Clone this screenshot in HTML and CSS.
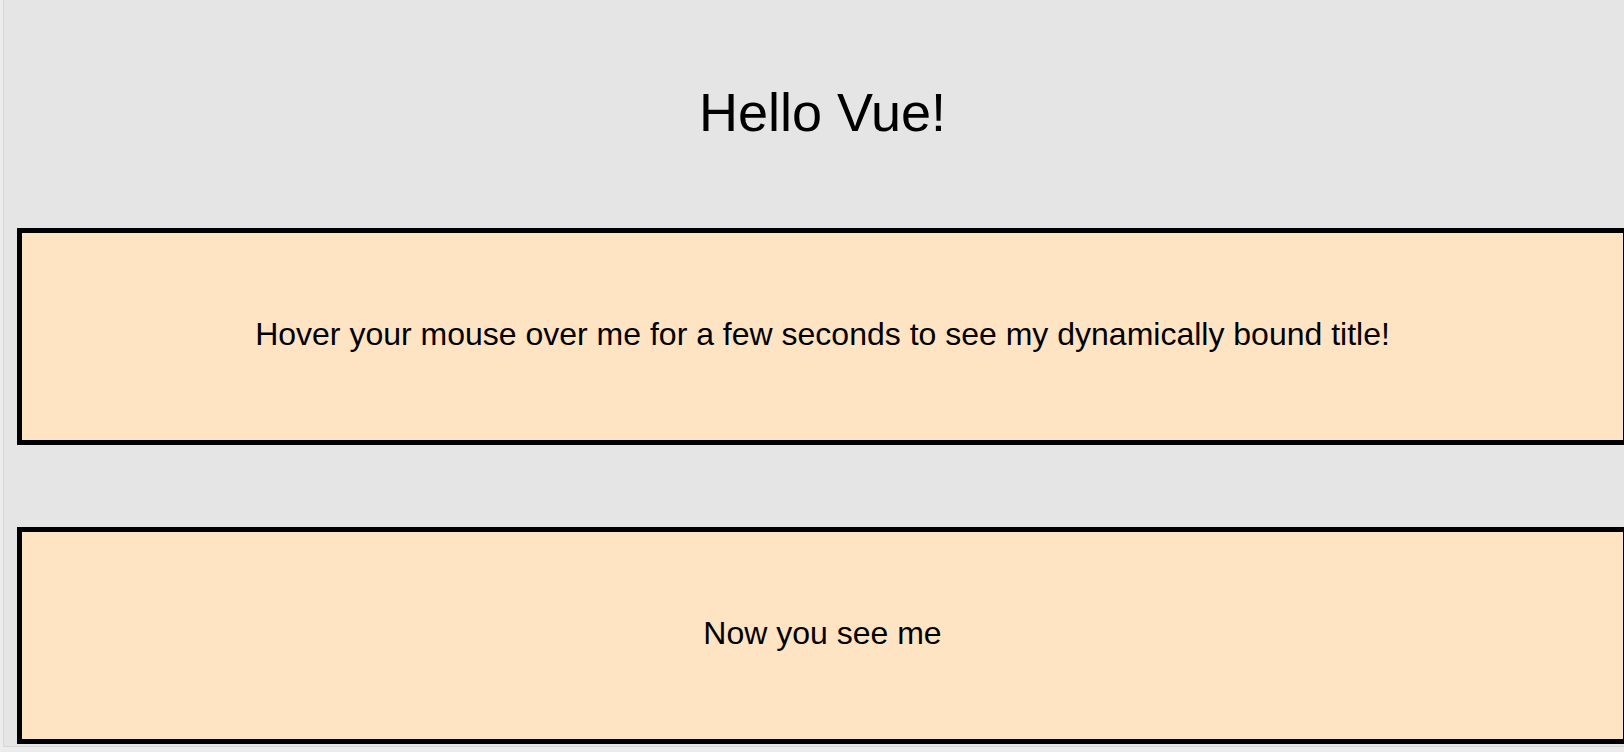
FILE: index.html
```html
<!DOCTYPE html>
<html lang="en">
<head>
<meta charset="utf-8">
<title>Hello Vue!</title>
<link rel="stylesheet" href="styles.css">
</head>
<body>
<div class="frame">
  <div class="app">
    <h1 class="title">Hello Vue!</h1>
    <div class="panel" title="You loaded this page on a recent date">
      <span class="panel-text">Hover your mouse over me for a few seconds to see my dynamically bound title!</span>
    </div>
    <div class="panel panel-second">
      <span class="panel-text">Now you see me</span>
    </div>
  </div>
</div>
</body>
</html>
```

FILE: styles.css
```css
html, body {
  margin: 0;
  padding: 0;
}

body {
  background: #ececec;
  font-family: "Liberation Sans", Arial, Helvetica, sans-serif;
  color: #000;
  overflow: hidden;
  height: 752px;
}

.frame {
  margin-left: 3px;
  height: 746px;
  background: #e5e5e5;
  border-left: 1px solid #d6d6d6;
  border-bottom: 1px solid #d6d6d6;
  overflow: hidden;
}

.app {
  padding-left: 13px;
  padding-top: 82px;
  width: 1611px;
}

.title {
  margin: 0;
  font-size: 54px;
  line-height: 60px;
  font-weight: normal;
  text-align: center;
}

.panel {
  margin-top: 86px;
  background: #ffe4c4;
  border: 5px solid #000;
  padding: 84px 0 88px;
  text-align: center;
  font-size: 32px;
  line-height: 35px;
}

.panel-second {
  margin-top: 82px;
}
```
